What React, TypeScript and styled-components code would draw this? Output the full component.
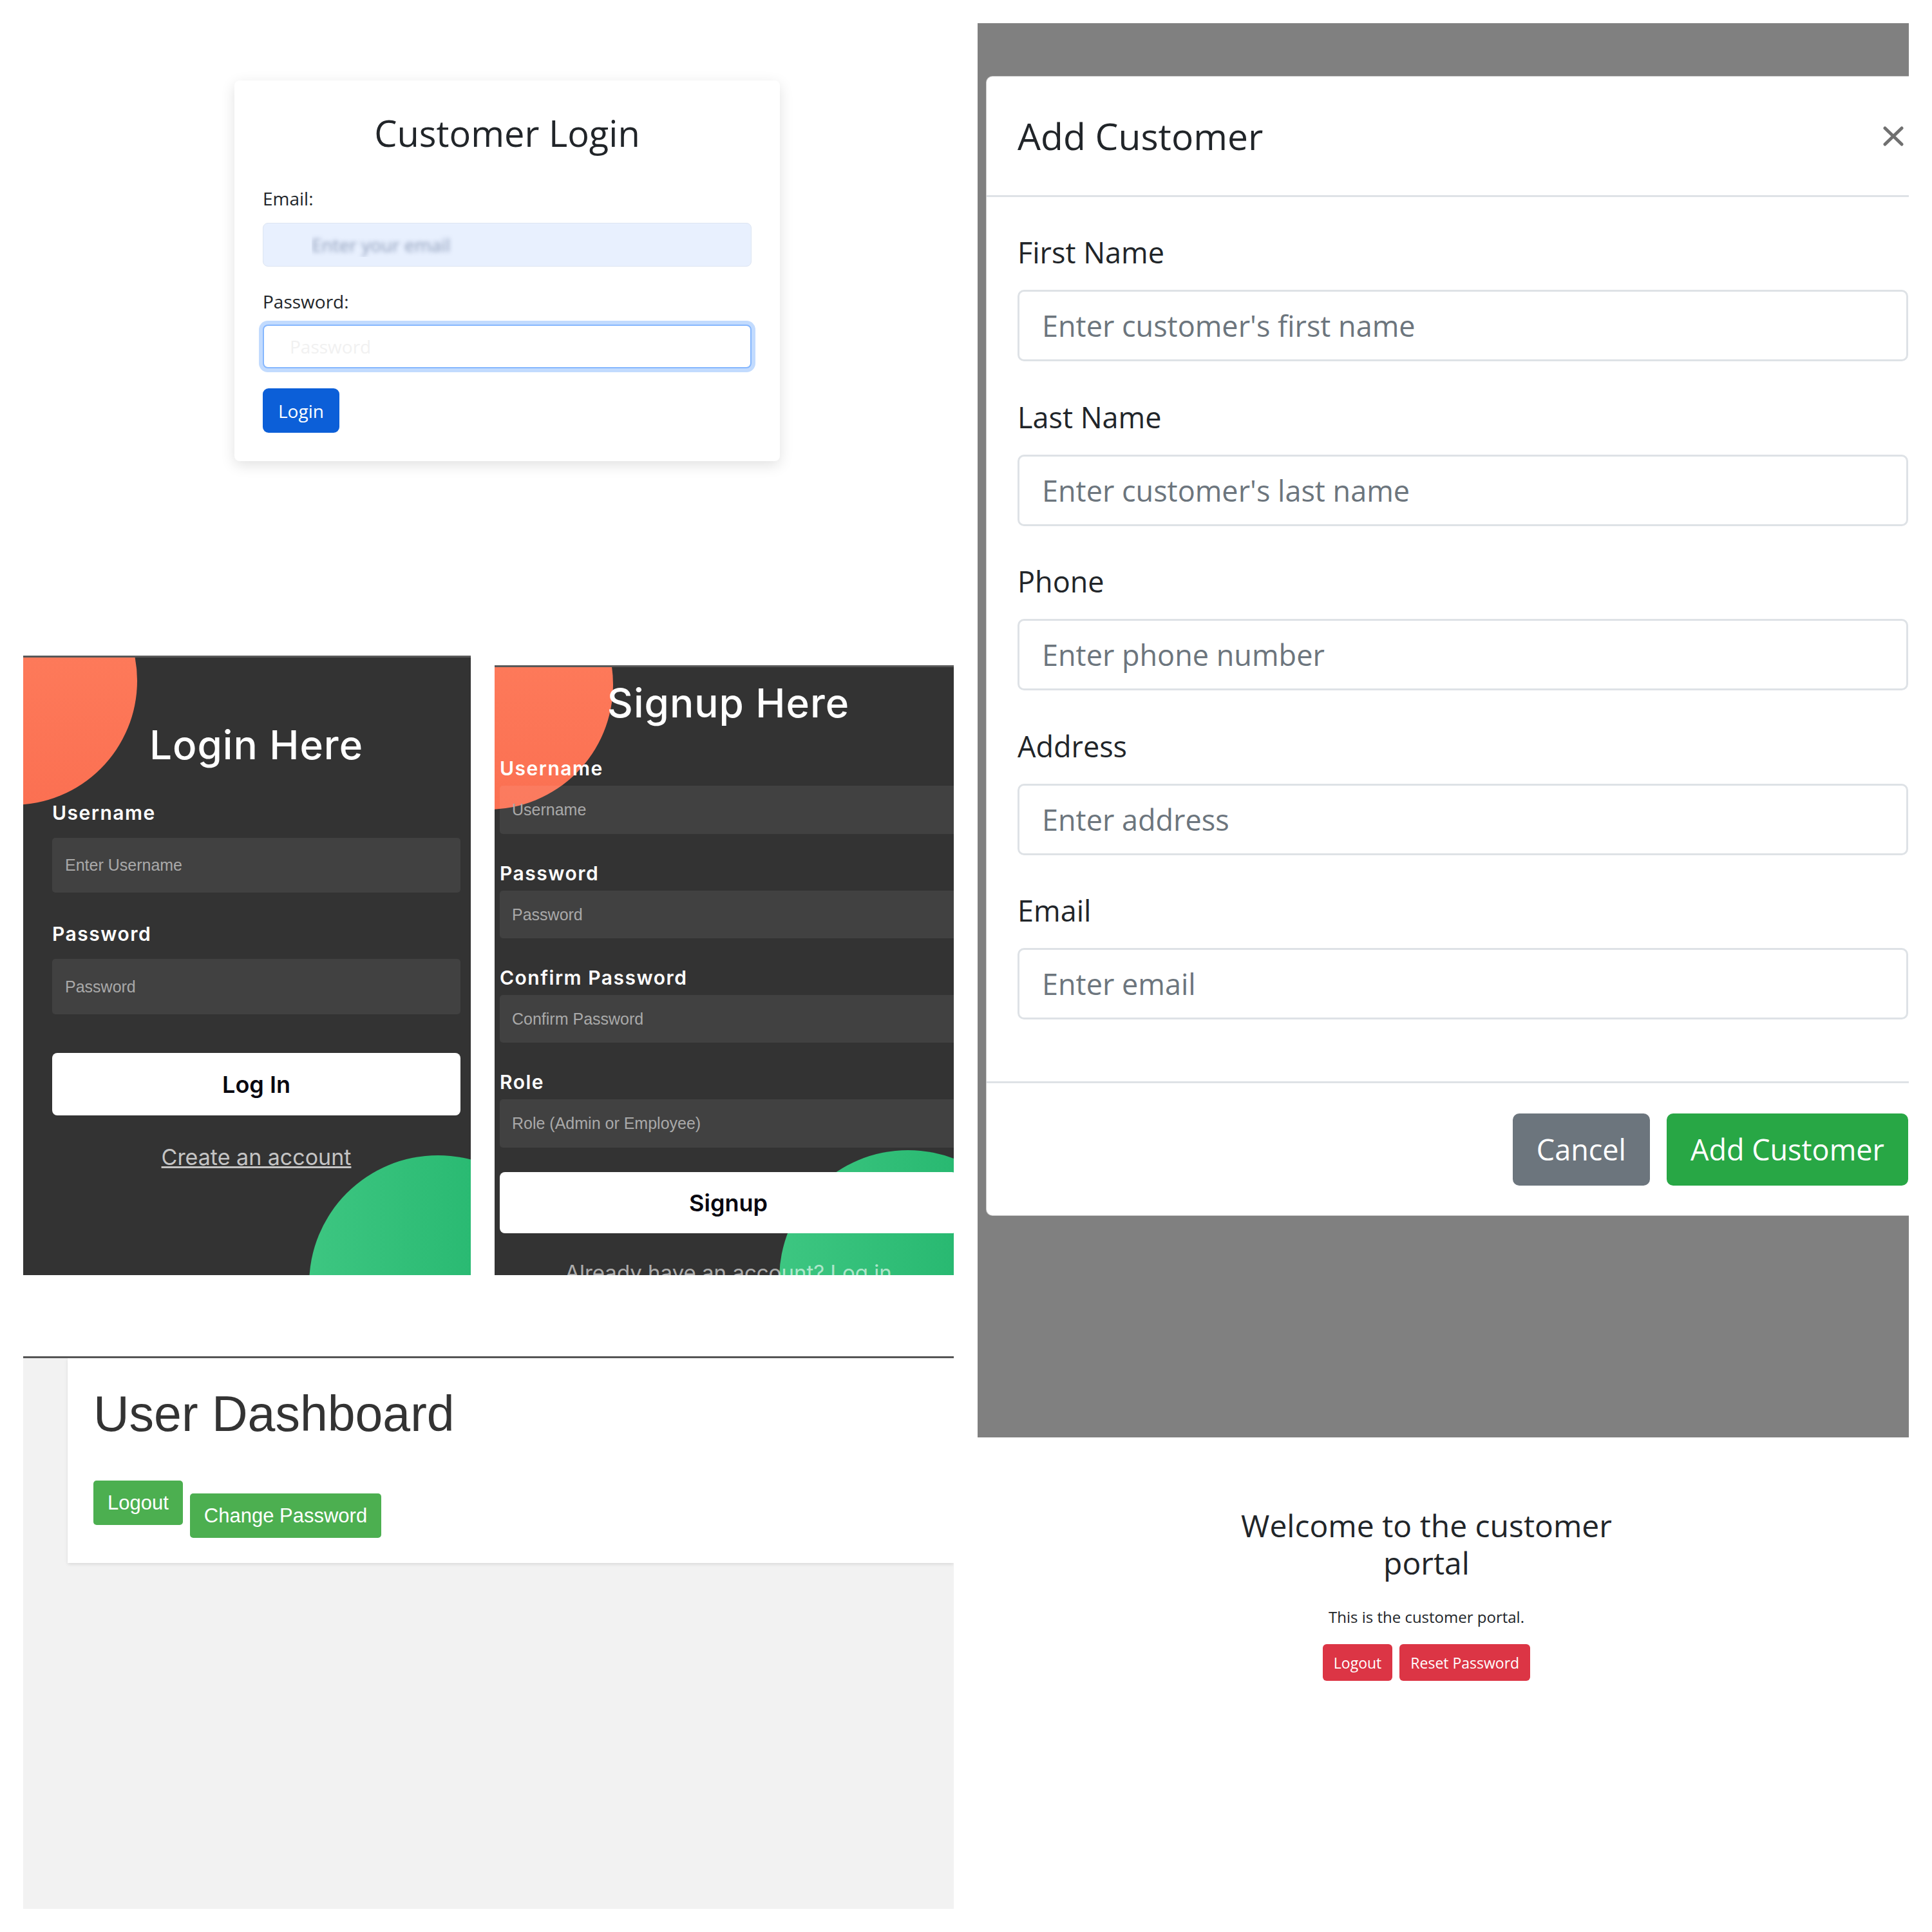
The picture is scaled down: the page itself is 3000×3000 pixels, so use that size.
import React from 'react';
import styled, { createGlobalStyle } from 'styled-components';

const bootstrapFont = `"Open Sans", "Noto Sans", sans-serif`;
const poppinsLike = `Inter, "Noto Sans", sans-serif`;
const arialLike = `"Liberation Sans", Arial, sans-serif`;

const GlobalStyle = createGlobalStyle`
  * { box-sizing: border-box; }
  body { margin: 0; background: #fff; }
`;

const Page = styled.div`
  width: 3000px;
  height: 3000px;
  display: flex;
  gap: 37px;
  padding-left: 36px;
  overflow: hidden;
`;

const LeftColumn = styled.div`
  width: 1445px;
  flex: none;
  display: flex;
  flex-direction: column;
`;

const RightColumn = styled.div`
  width: 1446px;
  flex: none;
  display: flex;
  flex-direction: column;
`;

/* ---------- customer login card ---------- */

const LoginCard = styled.div`
  margin: 125px 0 0 328px;
  width: 847px;
  padding: 48px 44px 44px;
  background: #fff;
  border-radius: 8px;
  box-shadow: 0 6px 22px rgba(0, 0, 0, 0.12);
  font-family: ${bootstrapFont};
  color: #212529;
`;

const CardTitle = styled.h2`
  margin: 0;
  font-size: 56px;
  font-weight: 500;
  line-height: 67px;
  text-align: center;
`;

const CardLabel = styled.label<{ $gap: number }>`
  display: block;
  margin-top: ${({ $gap }) => $gap}px;
  font-size: 28px;
  line-height: 42px;
`;

const CardInput = styled.input<{ $gap: number; $focused?: boolean }>`
  display: block;
  width: 100%;
  height: 68px;
  margin-top: ${({ $gap }) => $gap}px;
  padding: 0 0 0 ${({ $focused }) => ($focused ? 40 : 75)}px;
  border-radius: 8px;
  font-family: ${bootstrapFont};
  font-size: 28px;
  outline: none;
  border: ${({ $focused }) => ($focused ? '2px solid #86b7fe' : '1px solid #dde5f2')};
  background: ${({ $focused }) => ($focused ? '#fff' : '#e8f0fe')};
  box-shadow: ${({ $focused }) => ($focused ? '0 0 0 6px rgba(13, 110, 253, 0.25)' : 'none')};

  &::placeholder {
    color: ${({ $focused }) => ($focused ? '#f1f1f1' : 'transparent')};
    text-shadow: ${({ $focused }) => ($focused ? 'none' : '0 0 6px rgba(70, 90, 130, 0.55)')};
  }
`;

const PrimaryButton = styled.button`
  display: block;
  margin-top: 31px;
  height: 69px;
  padding: 0 24px;
  border: none;
  border-radius: 9px;
  background: #0c5fd8;
  color: #fff;
  font-family: ${bootstrapFont};
  font-size: 28px;
`;

/* ---------- dark login / signup panels ---------- */

const PanelRow = styled.div`
  margin-top: 302px;
  display: flex;
  align-items: flex-end;
  gap: 37px;
`;

const DarkPanel = styled.div<{ $width: number; $height: number; $padLeft: number }>`
  position: relative;
  flex: none;
  width: ${({ $width }) => $width}px;
  height: ${({ $height }) => $height}px;
  padding-left: ${({ $padLeft }) => $padLeft}px;
  background: #333333;
  border-top: 3px solid #585858;
  overflow: hidden;
  font-family: ${poppinsLike};
`;

const Blob = styled.div<{ $size: number; $left: number; $top: number; $tone: 'orange' | 'green' }>`
  position: absolute;
  width: ${({ $size }) => $size}px;
  height: ${({ $size }) => $size}px;
  left: ${({ $left }) => $left}px;
  top: ${({ $top }) => $top}px;
  border-radius: 50%;
  background: ${({ $tone }) =>
    $tone === 'orange'
      ? 'linear-gradient(#ff805f, #fb7052)'
      : 'linear-gradient(to right, #3dc681, #1fb36a)'};
`;

const PanelForm = styled.form<{ $width: number; $padTop: number }>`
  position: relative;
  z-index: 1;
  width: ${({ $width }) => $width}px;
  padding-top: ${({ $padTop }) => $padTop}px;
  display: flex;
  flex-direction: column;
`;

const PanelTitle = styled.h3`
  margin: 0;
  font-size: 62px;
  font-weight: 500;
  line-height: 82px;
  letter-spacing: 1px;
  color: #fff;
  text-align: center;
`;

const PanelLabel = styled.label<{ $gap: number }>`
  margin-top: ${({ $gap }) => $gap}px;
  font-size: 30px;
  font-weight: 600;
  line-height: 38px;
  letter-spacing: 1.5px;
  color: #fff;
`;

const PanelInput = styled.input<{ $gap: number; $height: number; $indent: number }>`
  width: 100%;
  margin-top: ${({ $gap }) => $gap}px;
  height: ${({ $height }) => $height}px;
  padding: 0 ${({ $indent }) => $indent}px;
  border: none;
  border-radius: 5px;
  background: rgba(255, 255, 255, 0.07);
  font-family: ${arialLike};
  font-size: 25px;
  color: #fff;
  outline: none;

  &::placeholder {
    color: #a9a9a9;
  }
`;

const PanelButton = styled.button<{ $gap: number; $height: number }>`
  width: 100%;
  margin-top: ${({ $gap }) => $gap}px;
  height: ${({ $height }) => $height}px;
  border: none;
  border-radius: 8px;
  background: #fff;
  color: #080710;
  font-family: ${poppinsLike};
  font-size: 36px;
  font-weight: 600;
`;

const PanelLink = styled.a`
  margin-top: 42px;
  text-align: center;
  font-size: 34px;
  line-height: 45px;
  color: #c4c4c4;
  text-decoration: underline;
`;

const PanelNote = styled.p`
  margin: 39px 0 0;
  text-align: center;
  font-size: 33px;
  line-height: 45px;
  color: rgba(255, 255, 255, 0.62);
  white-space: nowrap;
`;

/* ---------- user dashboard ---------- */

const Dashboard = styled.section`
  margin-top: 126px;
  height: 858px;
  padding-left: 69px;
  background: #f2f2f2;
  border-top: 3px solid #555;
  overflow: hidden;
  font-family: ${arialLike};
`;

const DashCard = styled.div`
  width: 1376px;
  height: 318px;
  padding: 41px 0 0 40px;
  background: #fff;
  box-shadow: 0 2px 5px rgba(0, 0, 0, 0.1);
`;

const DashTitle = styled.h1`
  margin: 0;
  font-size: 77px;
  font-weight: 400;
  line-height: 90px;
  color: #333;
`;

const DashActions = styled.div`
  margin-top: 59px;
  display: flex;
  align-items: flex-start;
  gap: 11px;
`;

const DashButton = styled.button<{ $offset?: number }>`
  margin-top: ${({ $offset }) => $offset ?? 0}px;
  height: 69px;
  padding: 0 22px;
  border: none;
  border-radius: 5px;
  background: #4caf50;
  color: #fff;
  font-family: ${arialLike};
  font-size: 31px;
`;

/* ---------- add customer modal ---------- */

const Backdrop = styled.div`
  margin-top: 36px;
  height: 2196px;
  padding: 82px 0 0 13px;
  background: #808080;
  overflow: hidden;
`;

const Modal = styled.div`
  width: 1481px;
  height: 1770px;
  display: flex;
  flex-direction: column;
  background: #fff;
  border: 1px solid rgba(0, 0, 0, 0.2);
  border-radius: 10px;
  font-family: ${bootstrapFont};
  color: #212529;
`;

const ModalHeader = styled.div`
  height: 187px;
  padding: 0 48px;
  display: flex;
  align-items: center;
  justify-content: space-between;
  border-bottom: 3px solid #dee2e6;
`;

const ModalTitle = styled.h5`
  margin: 0;
  font-size: 57px;
  font-weight: 500;
  line-height: 1.2;
`;

const CloseButton = styled.button`
  margin-right: 6px;
  padding: 0;
  border: none;
  background: none;
  display: flex;
`;

const ModalBody = styled.div`
  flex: 1;
  padding: 52px 48px 0;
  display: flex;
  flex-direction: column;
  gap: 52.5px;
`;

const FormGroup = styled.div`
  display: flex;
  flex-direction: column;
  gap: 25px;
`;

const ModalLabel = styled.label`
  font-size: 45px;
  line-height: 67px;
`;

const ModalInput = styled.input`
  height: 111px;
  padding: 0 35px;
  border: 3px solid #dee2e6;
  border-radius: 10px;
  font-family: ${bootstrapFont};
  font-size: 45px;
  outline: none;

  &::placeholder {
    color: #6c757d;
  }
`;

const ModalFooter = styled.div`
  height: 208px;
  padding-right: 48px;
  display: flex;
  align-items: center;
  justify-content: flex-end;
  gap: 26px;
  border-top: 3px solid #dee2e6;
`;

const FooterButton = styled.button<{ $tone: 'secondary' | 'success' }>`
  height: 112px;
  padding: 0 37px;
  border: none;
  border-radius: 10px;
  background: ${({ $tone }) => ($tone === 'secondary' ? '#6c757d' : '#28a745')};
  color: #fff;
  font-family: ${bootstrapFont};
  font-size: 45px;
`;

/* ---------- customer portal ---------- */

const Welcome = styled.div`
  width: 1394px;
  margin-top: 108px;
  text-align: center;
  font-family: ${bootstrapFont};
  color: #212529;
`;

const WelcomeTitle = styled.h2`
  max-width: 640px;
  margin: 0 auto;
  font-size: 48px;
  font-weight: 500;
  line-height: 57.6px;
`;

const WelcomeText = styled.p`
  margin: 38px 0 0;
  font-size: 24px;
  line-height: 36px;
`;

const WelcomeActions = styled.div`
  margin-top: 24px;
  display: flex;
  justify-content: center;
  gap: 11px;
`;

const DangerButton = styled.button`
  height: 57px;
  padding: 0 17px;
  border: none;
  border-radius: 6px;
  background: #dc3545;
  color: #fff;
  font-family: ${bootstrapFont};
  font-size: 23px;
`;

const signupFields = [
  { label: 'Username', placeholder: 'Username', gap: 41, height: 75 },
  { label: 'Password', placeholder: 'Password', gap: 42, height: 74 },
  { label: 'Confirm Password', placeholder: 'Confirm Password', gap: 42, height: 74 },
  { label: 'Role', placeholder: 'Role (Admin or Employee)', gap: 42, height: 75 },
];

const customerFields = [
  { label: 'First Name', placeholder: "Enter customer's first name" },
  { label: 'Last Name', placeholder: "Enter customer's last name" },
  { label: 'Phone', placeholder: 'Enter phone number' },
  { label: 'Address', placeholder: 'Enter address' },
  { label: 'Email', placeholder: 'Enter email' },
];

function CloseIcon() {
  return (
    <svg width="34" height="31" viewBox="0 0 34 31">
      <path d="M4 3 L30 28 M30 3 L4 28" stroke="#707070" strokeWidth="5" strokeLinecap="round" />
    </svg>
  );
}

export default function App() {
  return (
    <>
      <GlobalStyle />
      <Page>
        <LeftColumn>
          <LoginCard>
            <CardTitle>Customer Login</CardTitle>
            <CardLabel $gap={47}>Email:</CardLabel>
            <CardInput $gap={17} placeholder="Enter your email" />
            <CardLabel $gap={33}>Password:</CardLabel>
            <CardInput $gap={15} $focused type="password" placeholder="Password" />
            <PrimaryButton>Login</PrimaryButton>
          </LoginCard>

          <PanelRow>
            <DarkPanel $width={695} $height={962} $padLeft={45}>
              <Blob $tone="orange" $size={386} $left={-209} $top={-157} />
              <Blob $tone="green" $size={400} $left={444} $top={773} />
              <PanelForm $width={634} $padTop={95}>
                <PanelTitle>Login Here</PanelTitle>
                <PanelLabel $gap={45}>Username</PanelLabel>
                <PanelInput $gap={20} $height={85} $indent={20} placeholder="Enter Username" />
                <PanelLabel $gap={45}>Password</PanelLabel>
                <PanelInput $gap={20} $height={86} $indent={20} type="password" placeholder="Password" />
                <PanelButton $gap={60} $height={97}>Log In</PanelButton>
                <PanelLink>Create an account</PanelLink>
              </PanelForm>
            </DarkPanel>

            <DarkPanel $width={713} $height={947} $padLeft={8}>
              <Blob $tone="orange" $size={388} $left={-204} $top={-167} />
              <Blob $tone="green" $size={400} $left={442} $top={750} />
              <PanelForm $width={710} $padTop={15}>
                <PanelTitle>Signup Here</PanelTitle>
                {signupFields.map((field) => (
                  <React.Fragment key={field.label}>
                    <PanelLabel $gap={field.gap}>{field.label}</PanelLabel>
                    <PanelInput $gap={8} $height={field.height} $indent={19} placeholder={field.placeholder} />
                  </React.Fragment>
                ))}
                <PanelButton $gap={38} $height={95}>Signup</PanelButton>
                <PanelNote>Already have an account? Log in</PanelNote>
              </PanelForm>
            </DarkPanel>
          </PanelRow>

          <Dashboard>
            <DashCard>
              <DashTitle>User Dashboard</DashTitle>
              <DashActions>
                <DashButton>Logout</DashButton>
                <DashButton $offset={20}>Change Password</DashButton>
              </DashActions>
            </DashCard>
          </Dashboard>
        </LeftColumn>

        <RightColumn>
          <Backdrop>
            <Modal>
              <ModalHeader>
                <ModalTitle>Add Customer</ModalTitle>
                <CloseButton aria-label="Close">
                  <CloseIcon />
                </CloseButton>
              </ModalHeader>
              <ModalBody>
                {customerFields.map((field) => (
                  <FormGroup key={field.label}>
                    <ModalLabel>{field.label}</ModalLabel>
                    <ModalInput placeholder={field.placeholder} />
                  </FormGroup>
                ))}
              </ModalBody>
              <ModalFooter>
                <FooterButton $tone="secondary">Cancel</FooterButton>
                <FooterButton $tone="success">Add Customer</FooterButton>
              </ModalFooter>
            </Modal>
          </Backdrop>

          <Welcome>
            <WelcomeTitle>Welcome to the customer portal</WelcomeTitle>
            <WelcomeText>This is the customer portal.</WelcomeText>
            <WelcomeActions>
              <DangerButton>Logout</DangerButton>
              <DangerButton>Reset Password</DangerButton>
            </WelcomeActions>
          </Welcome>
        </RightColumn>
      </Page>
    </>
  );
}
